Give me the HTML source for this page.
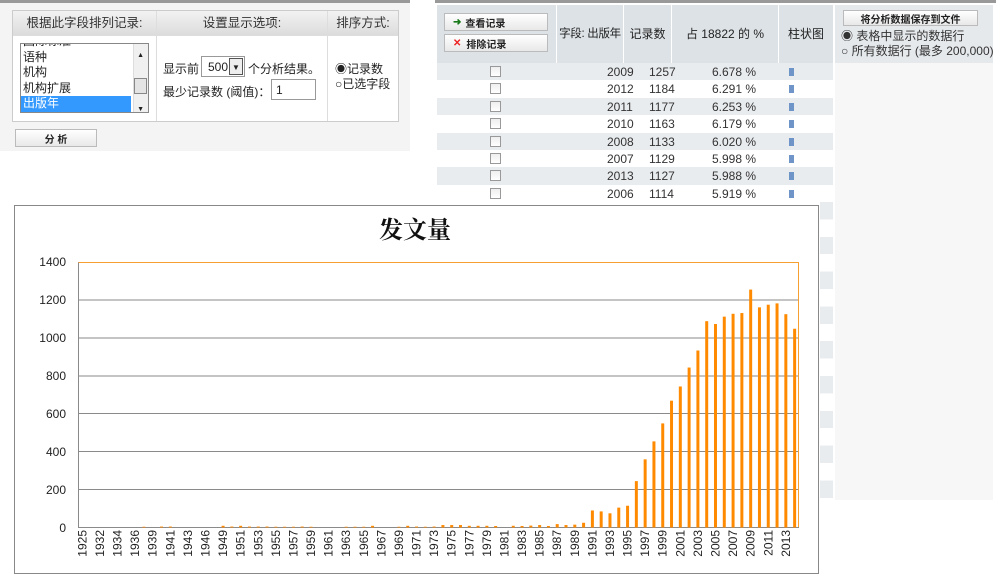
<!DOCTYPE html>
<html><head><meta charset="utf-8"><style>
*{margin:0;padding:0;box-sizing:border-box}
body{width:996px;height:575px;overflow:hidden;background:#fff;position:relative;font-family:"Liberation Sans","Noto Sans CJK SC",sans-serif;font-size:12px;color:#222}
.a{position:absolute}
.hd{background:linear-gradient(#f2f2f2,#dcdcdc);text-align:center;color:#333}
.btn{position:absolute;background:linear-gradient(#fff,#e8e8e8);border:1px solid #bbb;font-size:10px;font-weight:bold;display:flex;align-items:center;padding-left:8px}
.row{position:absolute;left:437px;width:396px;height:17.4px;font-size:12px;color:#333}
.row span{position:absolute;top:2px}
.cb{position:absolute;left:53px;top:3px;width:11px;height:11px;border:1px solid #999;background:linear-gradient(#eee,#fff)}
.bi{position:absolute;left:352px;top:5px;width:5px;height:8px;background:#6f95c8}
</style></head><body>
<div class="a" style="left:0;top:0;width:410px;height:3px;background:#999"></div>
<div class="a" style="left:435px;top:0;width:561px;height:3px;background:#999"></div>
<div class="a" style="left:0;top:3px;width:410px;height:148px;background:#f4f4f4"></div>
<div class="a" style="left:12px;top:10px;width:387px;height:112px;background:#ddd;border:1px solid #ccc"></div>
<div class="a hd" style="left:13px;top:11px;width:143px;height:24px;line-height:24px;font-size:12.5px">根据此字段排列记录:</div>
<div class="a hd" style="left:157px;top:11px;width:170px;height:24px;line-height:24px;font-size:12.5px">设置显示选项:</div>
<div class="a hd" style="left:328px;top:11px;width:70px;height:24px;line-height:24px;font-size:12.5px">排序方式:</div>
<div class="a" style="left:13px;top:36px;width:143px;height:85px;background:#fff"></div>
<div class="a" style="left:157px;top:36px;width:170px;height:85px;background:#fff"></div>
<div class="a" style="left:328px;top:36px;width:70px;height:85px;background:#fff"></div>
<div class="a" style="left:20px;top:43px;width:129px;height:70px;border:1px solid #888;overflow:hidden;background:#fff;font-size:12px;line-height:15.5px">
 <div style="margin-top:-10px;padding-left:2px">国际标准</div>
 <div style="padding-left:2px">语种</div><div style="padding-left:2px">机构</div><div style="padding-left:2px">机构扩展</div>
 <div style="padding-left:2px;background:#3399ff;color:#fff;width:110px">出版年</div>
 <div class="a" style="right:0;top:0;width:15px;height:68px;background:#f0f0f0;border-left:1px solid #ddd"></div>
 <div class="a" style="right:1px;top:34px;width:13px;height:16px;border:1px solid #888;background:#e4e4e4"></div>
 <div class="a" style="right:4px;top:4px;font-size:7px">▲</div><div class="a" style="right:4px;top:58px;font-size:7px">▼</div>
</div>
<div class="a" style="left:163px;top:60px;font-size:12px">显示前</div>
<div class="a" style="left:201px;top:56px;width:44px;height:21px;border:1px solid #999;background:#fff;font-size:12px;padding:3px 0 0 6px">500</div>
<div class="a" style="left:229px;top:58px;width:14px;height:17px;border:1px solid #555;background:#eee;font-size:8px;text-align:center;line-height:17px">▼</div>
<div class="a" style="left:248px;top:60px;font-size:12px">个分析结果。</div>
<div class="a" style="left:163px;top:83px;font-size:12px">最少记录数 (阈值)：</div>
<div class="a" style="left:271px;top:79px;width:45px;height:21px;border:1px solid #999;background:#fff;font-size:12px;padding:3px 0 0 4px">1</div>
<div class="a" style="left:335px;top:62px;font-size:12px;line-height:15px">◉记录数<br>○已选字段</div>
<div class="btn" style="left:15px;top:129px;width:82px;height:18px;justify-content:center;padding:0">分 析</div>
<div class="a" style="left:437px;top:5px;width:396px;height:495px;background:#fff"></div>
<div class="a" style="left:437px;top:5px;width:119px;height:58px;background:#dde2e6"></div>
<div class="a" style="left:557px;top:5px;width:66px;height:58px;background:#dde2e6;text-align:center;line-height:58px;white-space:nowrap;font-size:11.5px;letter-spacing:-0.3px">字段: 出版年</div>
<div class="a" style="left:624px;top:5px;width:47px;height:58px;background:#dde2e6;text-align:center;line-height:58px">记录数</div>
<div class="a" style="left:672px;top:5px;width:106px;height:58px;background:#dde2e6;text-align:center;line-height:58px">占 18822 的 %</div>
<div class="a" style="left:779px;top:5px;width:54px;height:58px;background:#dde2e6;text-align:center;line-height:58px">柱状图</div>
<div class="btn" style="left:444px;top:13px;width:104px;height:18px"><span style="color:#1a7a1a;margin-right:4px">➜</span>查看记录</div>
<div class="btn" style="left:444px;top:34px;width:104px;height:18px"><span style="color:#e22;margin-right:5px">✕</span>排除记录</div>
<div class="a" style="left:835px;top:5px;width:158px;height:58px;background:#e6e9ec"></div>
<div class="a" style="left:835px;top:63px;width:158px;height:437px;background:#f7f7f7"></div>
<div class="btn" style="left:843px;top:10px;width:135px;height:16px;justify-content:center;padding:0">将分析数据保存到文件</div>
<div class="a" style="left:841px;top:29px;font-size:12px;line-height:15px;color:#333">◉ 表格中显示的数据行<br>○ 所有数据行 (最多 200,000)</div>
<div class="row" style="top:63px;background:#e9ecef"><div class="cb"></div><span style="left:170px">2009</span><span style="left:212px">1257</span><span style="left:275px">6.678 %</span><div class="bi"></div></div>
<div class="row" style="top:80.4px"><div class="cb"></div><span style="left:170px">2012</span><span style="left:212px">1184</span><span style="left:275px">6.291 %</span><div class="bi"></div></div>
<div class="row" style="top:97.8px;background:#e9ecef"><div class="cb"></div><span style="left:170px">2011</span><span style="left:212px">1177</span><span style="left:275px">6.253 %</span><div class="bi"></div></div>
<div class="row" style="top:115.2px"><div class="cb"></div><span style="left:170px">2010</span><span style="left:212px">1163</span><span style="left:275px">6.179 %</span><div class="bi"></div></div>
<div class="row" style="top:132.6px;background:#e9ecef"><div class="cb"></div><span style="left:170px">2008</span><span style="left:212px">1133</span><span style="left:275px">6.020 %</span><div class="bi"></div></div>
<div class="row" style="top:150px"><div class="cb"></div><span style="left:170px">2007</span><span style="left:212px">1129</span><span style="left:275px">5.998 %</span><div class="bi"></div></div>
<div class="row" style="top:167.4px;background:#e9ecef"><div class="cb"></div><span style="left:170px">2013</span><span style="left:212px">1127</span><span style="left:275px">5.988 %</span><div class="bi"></div></div>
<div class="row" style="top:184.8px"><div class="cb"></div><span style="left:170px">2006</span><span style="left:212px">1114</span><span style="left:275px">5.919 %</span><div class="bi"></div></div>
<div class="a" style="left:820px;top:202px;width:13px;height:298px;background:repeating-linear-gradient(#e9ecef 0 17.4px,#fff 17.4px 34.8px)"></div>
<svg class="a" style="left:0;top:0" width="996" height="575">
<rect x="14.5" y="205.5" width="804" height="368" fill="#fff" stroke="#888"/>
<text x="415" y="238" text-anchor="middle" font-family="'Liberation Serif','Noto Serif CJK SC',serif" font-size="24" font-weight="bold" fill="#111">发文量</text>
<g stroke="#8a8a8a" stroke-width="1">
<line x1="78" y1="300" x2="799" y2="300"/><line x1="78" y1="338" x2="799" y2="338"/><line x1="78" y1="376" x2="799" y2="376"/><line x1="78" y1="413.5" x2="799" y2="413.5"/><line x1="78" y1="451.5" x2="799" y2="451.5"/><line x1="78" y1="489.5" x2="799" y2="489.5"/><line x1="78" y1="527.5" x2="799" y2="527.5"/>
<line x1="78.5" y1="262" x2="78.5" y2="528"/>
</g>
<path d="M78.5 262.5H798.5V527" fill="none" stroke="#f7a032"/>
<g font-size="12" fill="#222" text-anchor="end">
<text x="66" y="266">1400</text><text x="66" y="304">1200</text><text x="66" y="342">1000</text><text x="66" y="380">800</text><text x="66" y="418">600</text><text x="66" y="456">400</text><text x="66" y="494">200</text><text x="66" y="532">0</text>
</g>
<g transform="translate(78,527.5) scale(8.793,-0.18929)" fill="#ff8a00">
<rect x="7.33" width=".34" height="4"/><rect x="9.33" width=".34" height="5"/><rect x="10.33" width=".34" height="5"/>
<rect x="16.33" width=".34" height="9"/><rect x="17.33" width=".34" height="5"/><rect x="18.33" width=".34" height="9"/><rect x="19.33" width=".34" height="5"/><rect x="20.33" width=".34" height="5"/><rect x="21.33" width=".34" height="5"/><rect x="22.33" width=".34" height="4"/><rect x="23.33" width=".34" height="4"/><rect x="24.33" width=".34" height="4"/><rect x="25.33" width=".34" height="5"/><rect x="26.33" width=".34" height="4"/>
<rect x="30.33" width=".34" height="4"/><rect x="31.33" width=".34" height="4"/><rect x="32.33" width=".34" height="4"/><rect x="33.33" width=".34" height="9"/>
<rect x="36.33" width=".34" height="4"/><rect x="37.33" width=".34" height="9"/><rect x="38.33" width=".34" height="5"/><rect x="39.33" width=".34" height="4"/><rect x="40.33" width=".34" height="5"/><rect x="41.33" width=".34" height="13"/><rect x="42.33" width=".34" height="13"/><rect x="43.33" width=".34" height="13"/><rect x="44.33" width=".34" height="9"/><rect x="45.33" width=".34" height="9"/><rect x="46.33" width=".34" height="9"/><rect x="47.33" width=".34" height="8"/>
<rect x="49.33" width=".34" height="9"/><rect x="50.33" width=".34" height="8"/><rect x="51.33" width=".34" height="10"/><rect x="52.33" width=".34" height="13"/><rect x="53.33" width=".34" height="8"/><rect x="54.33" width=".34" height="18"/><rect x="55.33" width=".34" height="13"/>
<rect x="56.33" width=".34" height="15"/><rect x="57.33" width=".34" height="25"/><rect x="58.33" width=".34" height="90"/><rect x="59.33" width=".34" height="85"/><rect x="60.33" width=".34" height="75"/><rect x="61.33" width=".34" height="105"/><rect x="62.33" width=".34" height="115"/><rect x="63.33" width=".34" height="245"/><rect x="64.33" width=".34" height="360"/><rect x="65.33" width=".34" height="455"/><rect x="66.33" width=".34" height="550"/><rect x="67.33" width=".34" height="670"/><rect x="68.33" width=".34" height="745"/><rect x="69.33" width=".34" height="845"/><rect x="70.33" width=".34" height="935"/><rect x="71.33" width=".34" height="1090"/><rect x="72.33" width=".34" height="1075"/><rect x="73.33" width=".34" height="1114"/><rect x="74.33" width=".34" height="1129"/><rect x="75.33" width=".34" height="1133"/><rect x="76.33" width=".34" height="1257"/><rect x="77.33" width=".34" height="1163"/><rect x="78.33" width=".34" height="1177"/><rect x="79.33" width=".34" height="1184"/><rect x="80.33" width=".34" height="1127"/><rect x="81.33" width=".34" height="1050"/>
</g>
<g font-size="12" fill="#222" text-anchor="end">
<text transform="translate(86.4,530) rotate(-90)">1925</text><text transform="translate(104,530) rotate(-90)">1932</text><text transform="translate(121.6,530) rotate(-90)">1934</text><text transform="translate(139.2,530) rotate(-90)">1936</text><text transform="translate(156.7,530) rotate(-90)">1939</text><text transform="translate(174.3,530) rotate(-90)">1941</text><text transform="translate(191.9,530) rotate(-90)">1943</text><text transform="translate(209.5,530) rotate(-90)">1946</text><text transform="translate(227.1,530) rotate(-90)">1949</text><text transform="translate(244.7,530) rotate(-90)">1951</text><text transform="translate(262.3,530) rotate(-90)">1953</text><text transform="translate(279.8,530) rotate(-90)">1955</text><text transform="translate(297.4,530) rotate(-90)">1957</text><text transform="translate(315,530) rotate(-90)">1959</text><text transform="translate(332.6,530) rotate(-90)">1961</text><text transform="translate(350.2,530) rotate(-90)">1963</text><text transform="translate(367.8,530) rotate(-90)">1965</text><text transform="translate(385.4,530) rotate(-90)">1967</text><text transform="translate(402.9,530) rotate(-90)">1969</text><text transform="translate(420.5,530) rotate(-90)">1971</text><text transform="translate(438.1,530) rotate(-90)">1973</text><text transform="translate(455.7,530) rotate(-90)">1975</text><text transform="translate(473.3,530) rotate(-90)">1977</text><text transform="translate(490.9,530) rotate(-90)">1979</text><text transform="translate(508.5,530) rotate(-90)">1981</text><text transform="translate(526.1,530) rotate(-90)">1983</text><text transform="translate(543.6,530) rotate(-90)">1985</text><text transform="translate(561.2,530) rotate(-90)">1987</text><text transform="translate(578.8,530) rotate(-90)">1989</text><text transform="translate(596.4,530) rotate(-90)">1991</text><text transform="translate(614,530) rotate(-90)">1993</text><text transform="translate(631.6,530) rotate(-90)">1995</text><text transform="translate(649.2,530) rotate(-90)">1997</text><text transform="translate(666.7,530) rotate(-90)">1999</text><text transform="translate(684.3,530) rotate(-90)">2001</text><text transform="translate(701.9,530) rotate(-90)">2003</text><text transform="translate(719.5,530) rotate(-90)">2005</text><text transform="translate(737.1,530) rotate(-90)">2007</text><text transform="translate(754.7,530) rotate(-90)">2009</text><text transform="translate(772.3,530) rotate(-90)">2011</text><text transform="translate(789.8,530) rotate(-90)">2013</text>
</g>
</svg>
</body></html>
